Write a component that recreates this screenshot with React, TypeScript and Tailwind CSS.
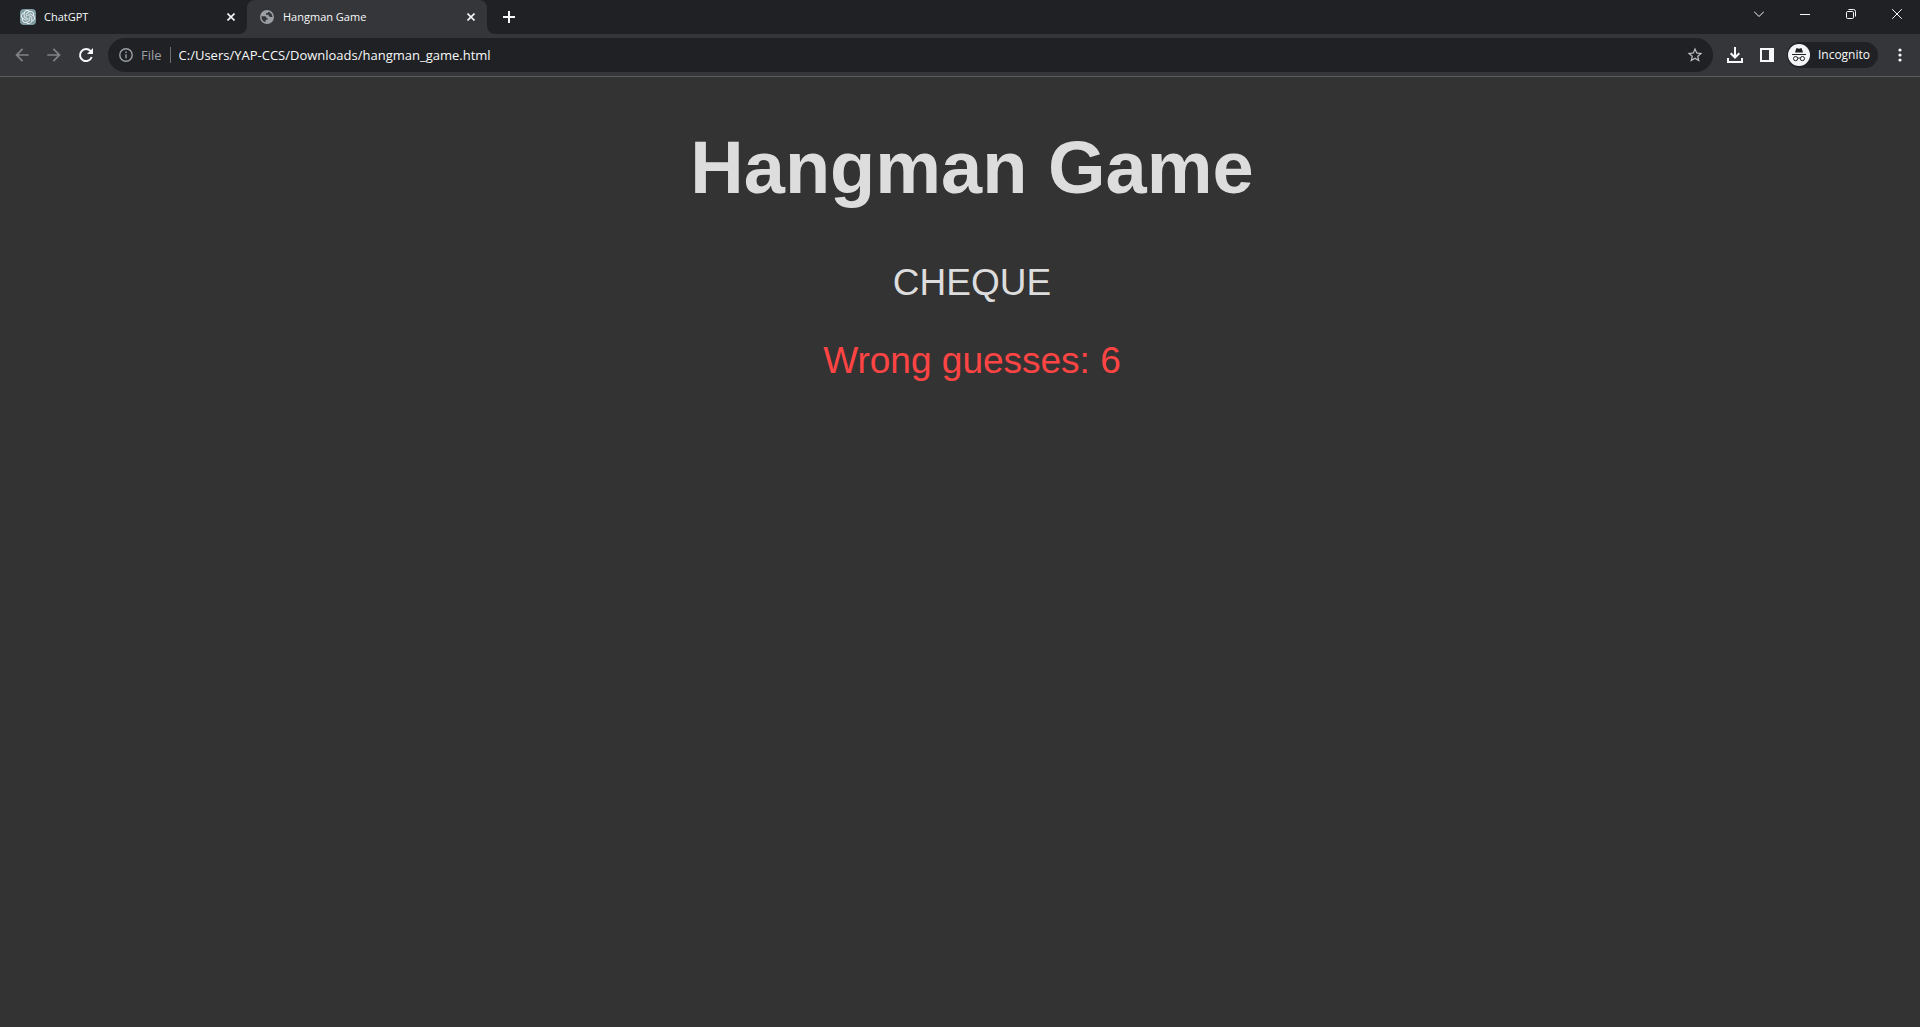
import type { ReactNode } from 'react';
import { MdArrowBack, MdArrowForward, MdStarBorder } from 'react-icons/md';
import { SiOpenai } from 'react-icons/si';

const MAX_WRONG = 6;
const WORD = 'CHEQUE';

export default function App() {
  return (
    <div className="flex min-h-screen flex-col bg-[#333333] font-['Open_Sans',sans-serif] text-[#f8f9fa]">
      <TabStrip />
      <Toolbar />
      <HangmanPage word={WORD} wrongGuesses={MAX_WRONG} />
    </div>
  );
}

function TabStrip() {
  return (
    <header className="flex h-[34px] items-stretch bg-[#202124]">
      <nav aria-label="Tabs" className="flex pl-2">
        <Tab
          title="ChatGPT"
          icon={
            <span className="flex size-4 items-center justify-center rounded-sm bg-[#7f9ca3] text-[#eef2f2]">
              <SiOpenai className="size-3.5" />
            </span>
          }
        />
        <Tab title="Hangman Game" active icon={<GlobeIcon />} />
      </nav>
      <button type="button" aria-label="New tab" className="ml-2 flex w-7 items-center justify-center">
        <svg viewBox="0 0 14 14" className="size-3.5" stroke="currentColor" strokeWidth="2">
          <path d="M7 1v12M1 7h12" />
        </svg>
      </button>
      <div className="ml-auto flex h-7">
        <WindowButton label="Search tabs">
          <path d="M0 2.5l5 5 5-5" />
        </WindowButton>
        <WindowButton label="Minimize">
          <path d="M0 5.5h10" />
        </WindowButton>
        <WindowButton label="Restore">
          <rect x="0.5" y="2.5" width="7" height="7" rx="1.2" />
          <path d="M2.5 0.5h5a2 2 0 0 1 2 2v5" />
        </WindowButton>
        <WindowButton label="Close">
          <path d="M0.2 0.2l9.6 9.6M9.8 0.2L0.2 9.8" />
        </WindowButton>
      </div>
    </header>
  );
}

function Tab({ title, icon, active = false }: { title: string; icon: ReactNode; active?: boolean }) {
  return (
    <div
      className={`relative flex items-center px-3 ${
        active ? 'w-60 rounded-t-lg bg-[#35363a]' : 'w-[239px]'
      }`}
    >
      {active && (
        <>
          <span className="absolute bottom-0 -left-2 size-2 bg-[#35363a]">
            <span className="block size-2 rounded-br-lg bg-[#202124]" />
          </span>
          <span className="absolute -right-2 bottom-0 size-2 bg-[#35363a]">
            <span className="block size-2 rounded-bl-lg bg-[#202124]" />
          </span>
        </>
      )}
      {icon}
      <span className="ml-2 flex-1 truncate text-[11px] leading-4">{title}</span>
      <button type="button" aria-label={`Close ${title}`} className="-mr-1 flex size-4 items-center justify-center">
        <svg viewBox="0 0 8 8" className="size-2" stroke="currentColor" strokeWidth="1.6">
          <path d="M0.5 0.5l7 7M7.5 0.5l-7 7" />
        </svg>
      </button>
    </div>
  );
}

function GlobeIcon() {
  return (
    <svg viewBox="0 0 16 16" className="size-4">
      <circle cx="8" cy="8" r="7" fill="#9aa0a6" />
      <path
        d="M2.4 7.2h3.4c1.6 0 1.7 1.2 1.7 2.1h1.2v1.5H6.6v2.4C4 12.7 2.4 10.4 2.4 7.2zM9.4 2.7c-.2 1.3-1 1.3-2.3 1.4v1.6h2.4c.1 1.6.9 2.2 2.3 2.2h1.7c-.1-2.4-1.7-4.6-4.1-5.2z"
        fill="#35363a"
      />
    </svg>
  );
}

function WindowButton({ label, children }: { label: string; children: ReactNode }) {
  return (
    <button type="button" aria-label={label} className="flex w-[46px] items-center justify-center">
      <svg viewBox="0 0 10 10" className="size-2.5" fill="none" stroke="currentColor" strokeWidth="1">
        {children}
      </svg>
    </button>
  );
}

function Toolbar() {
  return (
    <div className="flex h-[43px] items-center border-b border-[#5c5d62] bg-[#35363a] pr-1 pl-1.5">
      <ToolButton label="Back">
        <MdArrowBack className="size-5 text-[#828387]" />
      </ToolButton>
      <ToolButton label="Forward">
        <MdArrowForward className="size-5 text-[#828387]" />
      </ToolButton>
      <ToolButton label="Reload">
        <svg viewBox="0 0 16 16" className="size-4" fill="none" stroke="currentColor" strokeWidth="2">
          <path d="M12.6 4.2A6 6 0 1 0 13.7 10" />
          <path d="M15 1v6H9z" fill="currentColor" stroke="none" />
        </svg>
      </ToolButton>

      <div className="ml-1.5 flex h-[34px] flex-1 items-center rounded-full bg-[#202124] pr-2 pl-[11px]">
        <button type="button" className="flex items-center text-[13px] leading-5 text-[#9aa0a6]">
          <svg viewBox="0 0 14 14" className="mr-2 size-3.5" fill="none" stroke="currentColor" strokeWidth="1.4">
            <circle cx="7" cy="7" r="6.2" />
            <path d="M7 6.2v4M7 3.6V5" />
          </svg>
          File
        </button>
        <span className="mx-2 h-4 w-px bg-[#6b6e73]" />
        <input
          type="text"
          aria-label="Address"
          defaultValue="C:/Users/YAP-CCS/Downloads/hangman_game.html"
          className="min-w-0 flex-1 bg-transparent text-[13px] leading-5 outline-none"
        />
        <button type="button" aria-label="Bookmark this page" className="flex size-5 items-center justify-center">
          <MdStarBorder className="size-[18px] text-[#bdc1c6]" />
        </button>
      </div>

      <div className="ml-1.5 flex items-center">
        <ToolButton label="Downloads">
          <svg viewBox="0 0 16 16" className="size-4" fill="none" stroke="currentColor" strokeWidth="2">
            <path d="M8 0v10M3.7 6.2L8 10.5l4.3-4.3M1 11v4h14v-4" />
          </svg>
        </ToolButton>
        <ToolButton label="Side panel">
          <svg viewBox="0 0 14 14" className="size-3.5" fill="none" stroke="currentColor" strokeWidth="2">
            <rect x="1" y="1" width="12" height="12" />
            <path d="M9 1h4v12H9z" fill="currentColor" stroke="none" />
          </svg>
        </ToolButton>
        <button
          type="button"
          className="ml-1 flex h-[26px] items-center rounded-full bg-[#202124] pr-2 pl-px text-xs leading-4"
        >
          <IncognitoIcon />
          <span className="ml-2">Incognito</span>
        </button>
        <button type="button" aria-label="Menu" className="ml-1.5 flex size-8 items-center justify-center">
          <svg viewBox="0 0 4 14" className="h-3.5 w-1" fill="currentColor">
            <circle cx="2" cy="2" r="1.6" />
            <circle cx="2" cy="7" r="1.6" />
            <circle cx="2" cy="12" r="1.6" />
          </svg>
        </button>
      </div>
    </div>
  );
}

function ToolButton({ label, children }: { label: string; children: ReactNode }) {
  return (
    <button type="button" aria-label={label} className="flex size-8 items-center justify-center">
      {children}
    </button>
  );
}

function IncognitoIcon() {
  return (
    <svg viewBox="0 0 22 22" className="size-[22px]">
      <circle cx="11" cy="11" r="11" fill="#f4f5f6" />
      <path d="M7 8.5l1.2-3.8c.1-.5.5-.7 1-.5l1.8.5 1.8-.5c.5-.2.9 0 1 .5L15 8.5z" fill="#202124" />
      <path d="M4 10.5h14" stroke="#202124" strokeWidth="1" />
      <g fill="none" stroke="#202124" strokeWidth="1">
        <circle cx="7.6" cy="14.6" r="2.1" />
        <circle cx="14.4" cy="14.6" r="2.1" />
        <path d="M9.7 14.4c.8-.5 1.8-.5 2.6 0" />
      </g>
    </svg>
  );
}

function HangmanPage({ word, wrongGuesses }: { word: string; wrongGuesses: number }) {
  return (
    <main className="flex-1 pt-12 pl-6 text-center font-['Liberation_Sans',Arial,sans-serif] text-[37px] leading-[42px] text-[#dddddd]">
      <h1 className="text-[74px] leading-[86px] font-bold">Hangman Game</h1>
      <p className="mt-[51px]">{word}</p>
      <p className="mt-9 text-[#ff4444]">Wrong guesses: {wrongGuesses}</p>
    </main>
  );
}
